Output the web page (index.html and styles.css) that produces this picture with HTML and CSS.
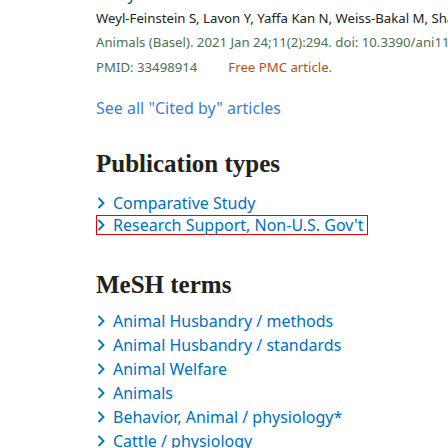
FILE: index.html
```html
<!DOCTYPE html>
<html lang="en">
<head>
<meta charset="utf-8">
<title>PubMed article</title>
<link rel="stylesheet" href="styles.css">
</head>
<body>
<main class="page">
  <section class="cited">
    <div class="citation">
      <a class="docsum-title" href="#">Dairy Cow Behavior and Welfare Assessment</a>
      <div class="authors">Weyl-Feinstein S, Lavon Y, Yaffa Kan N, Weiss-Bakal M, Shabtay A.</div>
      <div class="journal">Animals (Basel). 2021 Jan 24;11(2):294. doi: 10.3390/ani11020294.</div>
      <div class="pmid-row"><span class="pmid">PMID: 33498914</span><span class="free">Free PMC article.</span></div>
    </div>
    <a class="see-all" href="#">See all "Cited by" articles</a>
  </section>

  <section class="section pubtypes">
    <h2 class="heading">Publication types</h2>
    <ul class="term-list">
      <li><a class="term" href="#"><svg class="chev" viewBox="0 0 8 12" width="8" height="12"><polyline points="1.5,1 6.5,6 1.5,11"/></svg>Comparative Study</a></li>
      <li><a class="term focused" href="#"><svg class="chev" viewBox="0 0 8 12" width="8" height="12"><polyline points="1.5,1 6.5,6 1.5,11"/></svg>Research Support, Non-U.S. Gov't</a></li>
    </ul>
  </section>

  <section class="section mesh">
    <h2 class="heading">MeSH terms</h2>
    <ul class="term-list">
      <li><a class="term" href="#"><svg class="chev" viewBox="0 0 8 12" width="8" height="12"><polyline points="1.5,1 6.5,6 1.5,11"/></svg>Animal Husbandry / methods</a></li>
      <li><a class="term" href="#"><svg class="chev" viewBox="0 0 8 12" width="8" height="12"><polyline points="1.5,1 6.5,6 1.5,11"/></svg>Animal Husbandry / standards</a></li>
      <li><a class="term" href="#"><svg class="chev" viewBox="0 0 8 12" width="8" height="12"><polyline points="1.5,1 6.5,6 1.5,11"/></svg>Animal Welfare</a></li>
      <li><a class="term" href="#"><svg class="chev" viewBox="0 0 8 12" width="8" height="12"><polyline points="1.5,1 6.5,6 1.5,11"/></svg>Animals</a></li>
      <li><a class="term" href="#"><svg class="chev" viewBox="0 0 8 12" width="8" height="12"><polyline points="1.5,1 6.5,6 1.5,11"/></svg>Behavior, Animal / physiology*</a></li>
      <li><a class="term" href="#"><svg class="chev" viewBox="0 0 8 12" width="8" height="12"><polyline points="1.5,1 6.5,6 1.5,11"/></svg>Cattle / physiology</a></li>
    </ul>
  </section>
</main>
</body>
</html>
```

FILE: styles.css
```css
html, body {
  margin: 0;
  padding: 0;
  background: #ffffff;
}
html { overflow: hidden; }
body {
  font-family: "Noto Sans", "Open Sans", sans-serif;
}
.page {
  padding-left: 96px;
  white-space: nowrap;
}
a { text-decoration: none; }
.citation {
  font-size: 13.2px;
  line-height: 24px;
}
.docsum-title {
  display: block;
  margin-top: -16px;
  margin-bottom: 2px;
  color: #0c4f88;
  font-size: 16px;
  line-height: 20px;
  height: 20px;
}
.authors { color: #212121; }
.journal, .pmid { color: #4d6e57; }
.pmid-row { line-height: 26px; }
.free {
  color: #b4501a;
  margin-left: 31px;
}
.see-all {
  display: block;
  margin-top: 16px;
  color: #3a7fd4;
  font-size: 16px;
  line-height: 24px;
}
.pubtypes { margin-top: 29px; }
.mesh { margin-top: 35px; }
.heading {
  margin: 0;
  font-family: "Liberation Serif", "DejaVu Serif", serif;
  font-weight: 700;
  font-size: 25px;
  line-height: 30px;
  color: #212121;
}
.pubtypes .heading { margin-bottom: 14px; }
.mesh .heading { margin-bottom: 11px; }
.term-list {
  list-style: none;
  margin: 0;
  padding: 0;
}
.term-list li {
  display: flex;
  margin-bottom: 2px;
}
.mesh .term-list li { margin-bottom: 4px; }
.term {
  display: flex;
  align-items: center;
  color: #0071bc;
  font-size: 16px;
  line-height: 18px;
  padding-right: 4px;
  border: 1px solid transparent;
}
.focused { border-color: #e8000b; }
.chev {
  flex: none;
  margin-right: 8px;
  fill: none;
  stroke: #0071bc;
  stroke-width: 1.8;
}
```
